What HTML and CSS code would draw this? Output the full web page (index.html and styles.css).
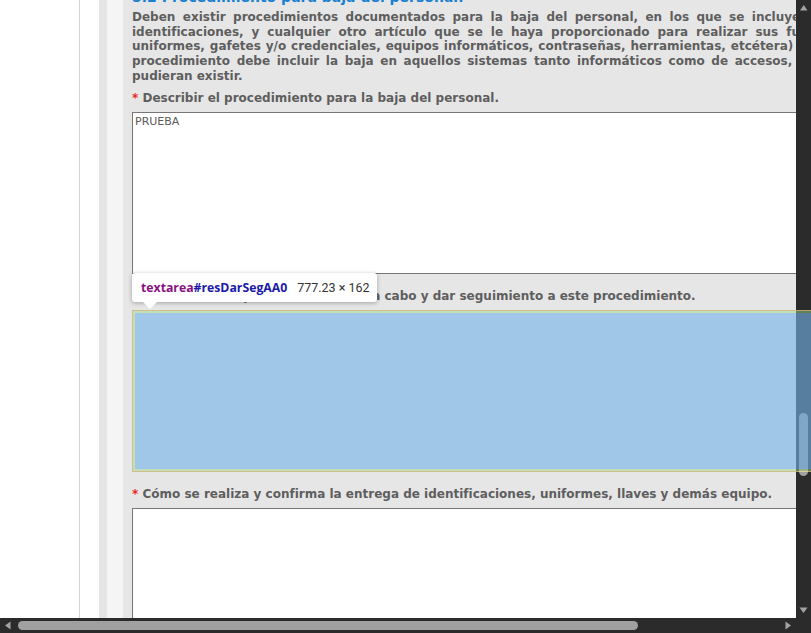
FILE: index.html
```html
<!DOCTYPE html>
<html lang="es">
<head>
<meta charset="utf-8">
<title>Procedimiento para baja del personal</title>
<link rel="stylesheet" href="styles.css">
</head>
<body>
<div class="screen">
  <div class="viewport">
    <div class="page">
      <div class="rail"></div>
      <div class="rule"></div>
      <div class="gutter"></div>
      <div class="edge-dark"></div>
      <div class="edge-light"></div>
      <div class="panel">
        <h2 class="title">5.2 Procedimiento para baja del personal.</h2>
        <p class="intro">
          <span class="line">Deben existir procedimientos documentados para la baja del personal, en los que se incluyen la devolución</span>
          <span class="line">identificaciones, y cualquier otro artículo que se le haya proporcionado para realizar sus funciones (llaves,</span>
          <span class="line">uniformes, gafetes y/o credenciales, equipos informáticos, contraseñas, herramientas, etcétera) Asimismo, dicho</span>
          <span class="line">procedimiento debe incluir la baja en aquellos sistemas tanto informáticos como de accesos, entre otros que</span>
          <span class="line last">pudieran existir.</span>
        </p>
        <label class="field-label" for="resProcBaja0"><span class="req">*</span> Describir el procedimiento para la baja del personal.</label>
        <textarea class="answer" id="resProcBaja0">PRUEBA</textarea>
        <label class="field-label" for="resDarSegAA0"><span class="req">*</span> Quién es el responsable de llevar a cabo y dar seguimiento a este procedimiento.</label>
        <textarea class="answer" id="resDarSegAA0"></textarea>
        <label class="field-label" for="resEntrega0"><span class="req">*</span> Cómo se realiza y confirma la entrega de identificaciones, uniformes, llaves y demás equipo.</label>
        <textarea class="answer" id="resEntrega0"></textarea>
      </div>
    </div>
  </div>
  <div class="vscroll">
    <div class="arrow-cell">
      <svg width="15" height="15" viewBox="0 0 15 15"><polygon points="4,10.5 11.5,10.5 7.75,5" fill="#a3a3a3"/></svg>
    </div>
    <div class="vtrack"><div class="vthumb"></div></div>
    <div class="arrow-cell">
      <svg width="15" height="15" viewBox="0 0 15 15"><polygon points="3.5,4.5 11.5,4.5 7.5,10" fill="#a3a3a3"/></svg>
    </div>
  </div>
  <div class="hscroll">
    <div class="arrow-cell">
      <svg width="15" height="15" viewBox="0 0 15 15"><polygon points="10.5,3.5 10.5,11.5 5,7.5" fill="#a3a3a3"/></svg>
    </div>
    <div class="htrack"><div class="hthumb"></div></div>
    <div class="arrow-cell">
      <svg width="15" height="15" viewBox="0 0 15 15"><polygon points="4.5,3.5 4.5,11.5 10,7.5" fill="#a3a3a3"/></svg>
    </div>
  </div>
  <div class="corner"></div>
</div>

<div class="inspect-box">
  <div class="inspect-pad"><div class="inspect-content"></div></div>
</div>
<div class="inspect-tip">
  <span class="tag">textarea</span><span class="idname">#resDarSegAA0</span><span class="dims">777.23 × 162</span>
</div>
</body>
</html>
```

FILE: styles.css
```css
html, body {
  margin: 0;
  padding: 0;
  width: 811px;
  height: 633px;
  overflow: hidden;
  background: #ffffff;
}

body {
  position: relative;
  font-family: "DejaVu Sans", Verdana, sans-serif;
}

.screen {
  display: grid;
  grid-template-columns: 796px 15px;
  grid-template-rows: 618px 15px;
  width: 811px;
  height: 633px;
}

.viewport {
  overflow: hidden;
  background: #ffffff;
}

.page {
  display: flex;
  height: 100%;
}

.rail { flex: 0 0 79px; background: #ffffff; }
.rule { flex: 0 0 1px; background: #d4d4d4; }
.gutter { flex: 0 0 19px; background: #ffffff; }
.edge-dark { flex: 0 0 8px; background: #e5e5e5; }
.edge-light { flex: 0 0 16px; background: #f5f5f5; }

.panel {
  flex: 0 0 auto;
  width: 777.23px;
  padding: 0 40px 0 9px;
  background: #e6e6e6;
  color: #5e5e5e;
}

.title {
  margin: -11px 0 4px;
  font-size: 14px;
  line-height: 17px;
  font-weight: bold;
  color: #1a7fcf;
  white-space: nowrap;
}

.intro {
  margin: 0 0 7px;
  font-size: 12px;
  line-height: 14.7px;
  font-weight: bold;
}

.line {
  display: block;
  text-align: justify;
  text-align-last: justify;
}

.line.last {
  text-align-last: left;
}

.field-label {
  display: block;
  margin: 0 0 6px;
  font-size: 12px;
  line-height: 15px;
  font-weight: bold;
  white-space: nowrap;
}

.req {
  color: #e8262b;
}

.answer {
  display: block;
  box-sizing: border-box;
  width: 777.23px;
  height: 162px;
  margin: 0 0 15px;
  padding: 2px;
  border: 1px solid #767676;
  border-radius: 0;
  background: #ffffff;
  color: #5a5a5a;
  font-family: "DejaVu Sans", Verdana, sans-serif;
  font-size: 11px;
  line-height: 14px;
  resize: none;
  overflow: hidden;
  outline: none;
}

/* scrollbars */
.vscroll {
  display: flex;
  flex-direction: column;
  background: #2b2b2b;
}

.hscroll {
  display: flex;
  background: #2b2b2b;
}

.arrow-cell {
  flex: 0 0 15px;
  height: 15px;
}

.arrow-cell svg { display: block; }

.vtrack {
  flex: 1;
  display: flex;
  flex-direction: column;
}

.vthumb {
  margin: 398px 0 0 3px;
  width: 9px;
  height: 63px;
  border-radius: 4.5px;
  background: #a0a0a0;
}

.htrack {
  flex: 1;
  display: flex;
  align-items: center;
}

.hthumb {
  margin-left: 3px;
  width: 620px;
  height: 9px;
  border-radius: 4.5px;
  background: #a0a0a0;
}

.corner { background: #2b2b2b; }

/* devtools inspect overlay */
.inspect-box {
  position: absolute;
  left: 132px;
  top: 310px;
  width: 777.23px;
  height: 162px;
  box-sizing: border-box;
  border: 1px solid rgba(255, 229, 153, 0.66);
  z-index: 5;
}

.inspect-pad {
  height: 100%;
  box-sizing: border-box;
  border: 2px solid rgba(147, 196, 125, 0.55);
}

.inspect-content {
  height: 100%;
  background: rgba(111, 168, 220, 0.66);
}

.inspect-tip {
  position: absolute;
  left: 132px;
  top: 273px;
  width: 245px;
  height: 29px;
  box-sizing: border-box;
  padding: 0 9px;
  display: flex;
  align-items: center;
  background: #ffffff;
  border-radius: 3px;
  box-shadow: 0 1px 4px rgba(0, 0, 0, 0.3);
  font-family: "Open Sans", "Noto Sans", sans-serif;
  font-size: 12.25px;
  white-space: nowrap;
  z-index: 6;
}

.inspect-tip::after {
  content: "";
  position: absolute;
  left: 11px;
  top: 29px;
  border-left: 7px solid transparent;
  border-right: 7px solid transparent;
  border-top: 7px solid #ffffff;
}

.tag { color: #881280; font-weight: bold; }
.idname { color: #1a1aa6; font-weight: bold; }
.dims {
  color: #333333;
  margin-left: 10px;
  font-family: Roboto, "Noto Sans", sans-serif;
  font-size: 12.5px;
}
```
